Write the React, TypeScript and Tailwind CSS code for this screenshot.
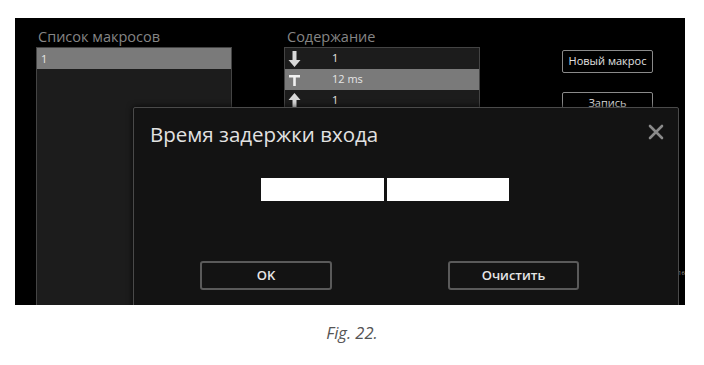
import React from 'react';

const ArrowDown: React.FC = () => (
  <svg width="13" height="16" viewBox="0 0 13 16" className="shrink-0">
    <path d="M4.5 0h4v9h4L6.5 16 0.5 9h4z" fill="#d8d8d8" />
  </svg>
);

const ArrowUp: React.FC = () => (
  <svg width="13" height="16" viewBox="0 0 13 16" className="shrink-0">
    <path d="M4.5 16h4V7h4L6.5 0 0.5 7h4z" fill="#d8d8d8" />
  </svg>
);

const TimerIcon: React.FC = () => (
  <svg width="13" height="16" viewBox="0 0 13 16" className="shrink-0">
    <path d="M1 3h11v2.5H7.8V14H5.2V5.5H1z" fill="#f0f0f0" />
  </svg>
);

const rows = [
  { icon: <ArrowDown />, text: '1', active: false },
  { icon: <TimerIcon />, text: '12 ms', active: true },
  { icon: <ArrowUp />, text: '1', active: false },
];

const App: React.FC = () => {
  return (
    <div className="w-[704px] h-[365px] bg-white pt-[18px] pl-[15px]" style={{ fontFamily: '"Open Sans", "Noto Sans", sans-serif' }}>
      <div className="relative w-[670px] h-[287px] bg-black overflow-hidden">
        <div className="flex pt-[9px]">
          {/* macro list */}
          <div className="ml-[21px] w-[196px] flex flex-col">
            <div className="h-[20px] pl-[2px] text-[14.5px] leading-[20px] text-[#858585]">Список макросов</div>
            <div className="h-[270px] border border-[#444] bg-[#1c1c1c]">
              <div className="h-[21px] bg-[#7a7a7a] pl-[4px] text-[11px] leading-[21px] text-[#e6e6e6]">1</div>
            </div>
          </div>

          {/* content */}
          <div className="ml-[52px] w-[196px] flex flex-col">
            <div className="h-[20px] pl-[3px] text-[14.5px] leading-[20px] text-[#858585]">Содержание</div>
            <div className="h-[270px] border border-[#444] bg-[#1c1c1c]">
              {rows.map((r, i) => (
                <div key={i} className={`flex items-center h-[21px] pl-[3px] ${r.active ? 'bg-[#7a7a7a]' : ''}`}>
                  {r.icon}
                  <span className="ml-[31px] text-[11px] text-[#e6e6e6]">{r.text}</span>
                </div>
              ))}
            </div>
          </div>

          {/* buttons */}
          <div className="ml-[82px] mt-[23px] w-[91px] flex flex-col gap-[19px]">
            <div className="h-[23px] rounded-[2px] border border-[#8a8a8a] flex items-center justify-center text-[11px] text-[#e0e0e0]">Новый макрос</div>
            <div className="h-[23px] rounded-[2px] border border-[#8a8a8a] flex items-center justify-center text-[11px] text-[#e0e0e0]">Запись</div>
          </div>
        </div>

        {/* right edge fragments */}
        <div className="absolute left-[663px] top-[251px] text-[6px] leading-[8px] text-[#bbb]">16</div>

        {/* dialog */}
        <div className="absolute left-[118px] top-[89px] w-[546px] h-[210px] bg-[#131313] border border-[#4a4a4a] rounded-[2px] shadow-[0_0_6px_rgba(0,0,0,0.8)]">
          <div className="flex items-start justify-between pl-[16px] pr-[14px] pt-[12px]">
            <div className="text-[20.5px] leading-[28px] text-[#e2e2e2]">Время задержки входа</div>
            <svg width="16" height="16" viewBox="0 0 16 16" className="mt-[4px]">
              <path d="M2 2L14 14M14 2L2 14" stroke="#8a8a8a" strokeWidth="2.6" strokeLinecap="round" />
            </svg>
          </div>
          <div className="flex ml-[127px] mt-[30px] gap-[3px]">
            <div className="w-[123px] h-[23px] bg-white" />
            <div className="w-[122px] h-[23px] bg-white" />
          </div>
          <div className="flex pl-[66px] mt-[60px] gap-[116px]">
            <div className="w-[132px] h-[29px] rounded-[3px] border-2 border-[#5a5a5a] flex items-center justify-center text-[13px] font-semibold text-[#e6e6e6]">OK</div>
            <div className="w-[131px] h-[29px] rounded-[3px] border-2 border-[#5a5a5a] flex items-center justify-center text-[13px] font-semibold text-[#e6e6e6]">Очистить</div>
          </div>
        </div>
      </div>
      <div className="mt-[16px] -ml-[15px] text-center text-[16.5px] italic text-[#555]">Fig. 22.</div>
    </div>
  );
};

export default App;
